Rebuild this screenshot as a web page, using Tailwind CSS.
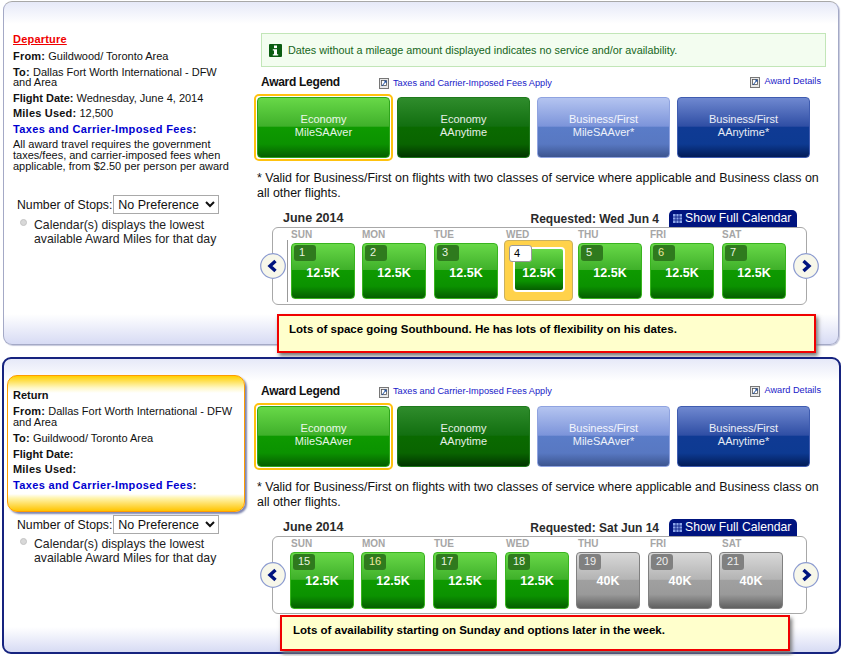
<!DOCTYPE html>
<html lang="en">
<head>
  <meta charset="UTF-8" />
  <title>Award Calendar</title>
  <script src="https://cdn.jsdelivr.net/npm/@tailwindcss/browser@4"></script>
</head>
<body class="bg-white">
<div class="w-[847px] h-[656px] overflow-hidden relative font-['Liberation_Sans',Arial,sans-serif] text-[11px] text-[#111]">

  <!-- departure panel -->
  <section class="relative ml-[3px] mt-[1px] w-[836px] h-[344px] flex border border-[#a4a9c6] border-t-[#a8a8a8] rounded-[9px] shadow-[1px_1px_1px_#c5c8dc] bg-[linear-gradient(#e6e9f8,#ffffff_22px,#ffffff_312px,#d7dbf4)]">
    <div class="w-[250px] shrink-0 pl-[9px] pt-[30px]">
      <p class="font-bold text-[#f00000] underline leading-[14px] tracking-[0.2px]">Departure</p>
      <p class="mt-[3px] leading-[14px]"><b class="tracking-[0.2px]">From:</b> Guildwood/ Toronto Area</p>
      <p class="mt-[2px] leading-[10px] pt-[2px] pb-[1px] w-[225px]"><b class="tracking-[0.2px]">To:</b> Dallas Fort Worth International - DFW and Area</p>
      <p class="mt-[3px] leading-[14px]"><b>Flight Date:</b> Wednesday, June 4, 2014</p>
      <p class="mt-[1px] leading-[14px]"><b class="tracking-[0.2px]">Miles Used:</b> 12,500</p>
      <p class="mt-[2px] leading-[14px] font-bold tracking-[0.35px]"><span class="text-[#0000d0]">Taxes and Carrier-Imposed Fees</span>:</p>
      <p class="mt-[3px] leading-[11px] w-[225px]">All award travel requires the government taxes/fees, and carrier-imposed fees when applicable, from $2.50 per person per award</p>
      <div class="mt-[23px] ml-[4px] flex items-center gap-[1px] text-[12.25px]">
        <span class="mt-[1px]">Number of Stops:</span>
        <select class="w-[106px] h-[19px] border border-[#a9a9a9] bg-white text-[12.5px]"><option>No Preference</option></select>
      </div>
      <div class="mt-[4px] ml-[7px] flex leading-[14px] text-[#222]">
        <span class="mt-[1px] mr-[7px] w-[7px] h-[7px] rounded-full bg-[#d8d8d8] border border-[#c4c4c4] shrink-0"></span>
        <p class="w-[190px] text-[12.25px]">Calendar(s) displays the lowest available Award Miles for that day</p>
      </div>
    </div>
    <div class="w-[570px] pt-[31px]">
      <div class="ml-[7px] w-[565px] h-[34px] border border-[#c2e6b8] bg-[#f3fdf0] flex items-center pl-[7px] gap-[6px] text-[10.8px] text-[#15651a]">
        <svg width="13" height="13" viewBox="0 0 13 13"><rect width="13" height="13" rx="1" fill="#0b5c12"/><rect x="5" y="1.5" width="3" height="2.6" fill="#fff"/><path d="M3.8 5.2h4.2v5h1.2v1.4H3.8v-1.4H5V6.6H3.8z" fill="#fff"/></svg>
        <span>Dates without a mileage amount displayed indicates no service and/or availability.</span>
      </div>
      <div class="ml-[7px] mt-[7px] w-[560px] h-[16px] flex items-center">
        <b class="w-[118px] text-[12px] text-[#111] tracking-[-0.3px]">Award Legend</b>
        <svg width="10" height="11" viewBox="0 0 10 11" class="mr-[4px] mt-[3px]"><rect x="0.5" y="0.5" width="9" height="10" fill="#e8e8e8" stroke="#777"/><rect x="2.5" y="2.5" width="5" height="5" fill="#fff" stroke="#555" stroke-width=".8"/><path d="M3 8l4-5M5 3h2v2" fill="none" stroke="#1f4f9f"/></svg>
        <span class="text-[9.2px] text-[#2020c8] mt-[3px]">Taxes and Carrier-Imposed Fees Apply</span>
        <svg width="10" height="11" viewBox="0 0 10 11" class="ml-auto mr-[4px]"><rect x="0.5" y="0.5" width="9" height="10" fill="#e8e8e8" stroke="#777"/><rect x="2.5" y="2.5" width="5" height="5" fill="#fff" stroke="#555" stroke-width=".8"/><path d="M3 8l4-5M5 3h2v2" fill="none" stroke="#1f4f9f"/></svg>
        <span class="text-[9.2px] text-[#2020c8]">Award Details</span>
      </div>
      <div class="mt-[4px] flex items-center gap-[7px] leading-[13px] text-center text-white/90">
        <div class="w-[139px] h-[67px] border-[2px] border-[#ffc20e] rounded-[5px] p-[1px]">
          <div class="h-full border border-[#2fa51c] rounded-[4px] flex flex-col justify-center pb-[3px] bg-[linear-gradient(#68d848,#3fb02a_48%,#0e9a00_49%,#0b9200_78%,#055f00)]">Economy<br>MileSAAver</div>
        </div>
        <div class="w-[133px] h-[61px] -ml-[3px] border border-[#1f7a1c] rounded-[4px] flex flex-col justify-center pb-[3px] bg-[linear-gradient(#2f8c2c,#126f10_48%,#0a6a00_49%,#096400_78%,#013500)]">Economy<br>AAnytime</div>
        <div class="w-[133px] h-[61px] border border-[#8fa3e0] rounded-[4px] flex flex-col justify-center pb-[3px] bg-[linear-gradient(#b4c4f0,#7c94da_48%,#5a7cc8_49%,#5878c2_78%,#3c5590)]">Business/First<br>MileSAAver*</div>
        <div class="w-[133px] h-[61px] border border-[#3f5cb0] rounded-[4px] flex flex-col justify-center pb-[3px] bg-[linear-gradient(#6f88d0,#2f4ea4_48%,#0f3a94_49%,#0d3a92_78%,#021c58)]">Business/First<br>AAnytime*</div>
      </div>
      <p class="ml-[3px] mt-[10px] w-[570px] leading-[15px] text-[12.45px]">* Valid for Business/First on flights with two classes of service where applicable and Business class on all other flights.</p>
      <div class="ml-[29px] mt-[8px] w-[514px] h-[18px] flex items-center font-bold text-[12px] text-[#2a2a2a]">
        <span class="text-[12.5px] mt-[1px]">June 2014</span>
        <span class="ml-auto mr-[10px] mt-[1px]">Requested: Wed Jun 4</span>
        <span class="w-[128px] h-[17px] bg-[#00147f] rounded-t-[5px] flex items-center pl-[4px] gap-[3px] font-normal text-white text-[12.2px]">
          <svg width="9" height="9" viewBox="0 0 9 9"><path d="M0 0h9v9H0z" fill="#8aa4e8"/><path d="M3 0v9M6 0v9M0 3h9M0 6h9" stroke="#00147f" stroke-width=".8"/></svg>Show Full Calendar
        </span>
      </div>
      <div class="relative ml-[18px] w-[535px] h-[78px] border border-[#a8a8a8] rounded-[6px] bg-white">
        <svg width="26" height="26" viewBox="0 0 26 26" class="absolute -left-[13px] top-[25px]"><circle cx="13" cy="13" r="12.3" fill="#f7f7ea" stroke="#8c9bd0" stroke-width="1.2"/><path d="M15.5 8L10 13l5.5 5" fill="none" stroke="#00147f" stroke-width="3.4"/></svg>
        <svg width="26" height="26" viewBox="0 0 26 26" class="absolute -right-[13px] top-[25px]"><circle cx="13" cy="13" r="12.3" fill="#f7f7ea" stroke="#8c9bd0" stroke-width="1.2"/><path d="M10.5 8l5.5 5-5.5 5" fill="none" stroke="#00147f" stroke-width="3.4"/></svg>
        <div class="flex ml-[18px] text-[10px] font-bold text-[#a6a6a6] leading-[12px] pt-[1px]">
          <span class="w-[71px]">SUN</span><span class="w-[72px]">MON</span><span class="w-[72px]">TUE</span><span class="w-[72px]">WED</span><span class="w-[72px]">THU</span><span class="w-[72px]">FRI</span><span>SAT</span>
        </div>
        <div class="absolute left-[14px] top-[12px] h-[62px] border-l border-[#999]"></div>
        <div class="flex ml-[18px] mt-[2px] gap-[8px]">
          <div class="relative w-[64px] h-[56px] border border-[#39b41f] rounded-[4px] bg-[linear-gradient(#68d848,#3fb02a_48%,#0e9a00_49%,#0b9200_78%,#055f00)] text-white text-center"><span class="absolute left-[2px] top-[1px] w-[22px] h-[16px] rounded-[3px] bg-[#2f7a1e] text-[#e8f4e0] text-[11px] leading-[14px] text-left pl-[5px]">1</span><b class="block pt-[21px] text-[12.5px] leading-[16px]">12.5K</b></div>
          <div class="-ml-[1px] relative w-[64px] h-[56px] border border-[#39b41f] rounded-[4px] bg-[linear-gradient(#68d848,#3fb02a_48%,#0e9a00_49%,#0b9200_78%,#055f00)] text-white text-center"><span class="absolute left-[2px] top-[1px] w-[22px] h-[16px] rounded-[3px] bg-[#2f7a1e] text-[#e8f4e0] text-[11px] leading-[14px] text-left pl-[5px]">2</span><b class="block pt-[21px] text-[12.5px] leading-[16px]">12.5K</b></div>
          <div class="relative w-[64px] h-[56px] border border-[#39b41f] rounded-[4px] bg-[linear-gradient(#68d848,#3fb02a_48%,#0e9a00_49%,#0b9200_78%,#055f00)] text-white text-center"><span class="absolute left-[2px] top-[1px] w-[22px] h-[16px] rounded-[3px] bg-[#2f7a1e] text-[#e8f4e0] text-[11px] leading-[14px] text-left pl-[5px]">3</span><b class="block pt-[21px] text-[12.5px] leading-[16px]">12.5K</b></div>
          <div class="relative w-[64px] h-[56px]">
            <div class="absolute -left-[2px] -top-[3px] w-[69px] h-[61px] rounded-[4px] bg-[#ffd24a] border border-[#c9b060]"></div>
            <div class="absolute left-[7px] top-[4px] w-[52px] h-[45px] rounded-[4px] border-[2px] border-white bg-[linear-gradient(#68d848,#3fb02a_48%,#0e9a00_49%,#0b9200_78%,#055f00)] text-white text-center"><b class="block pt-[16px] text-[12.5px] leading-[16px]">12.5K</b></div>
            <span class="absolute left-[3px] top-[2px] w-[23px] h-[17px] rounded-[3px] bg-white border border-[#999] text-black text-[11px] leading-[15px] pl-[4px]">4</span>
          </div>
          <div class="relative w-[64px] h-[56px] border border-[#39b41f] rounded-[4px] bg-[linear-gradient(#68d848,#3fb02a_48%,#0e9a00_49%,#0b9200_78%,#055f00)] text-white text-center"><span class="absolute left-[2px] top-[1px] w-[22px] h-[16px] rounded-[3px] bg-[#2f7a1e] text-[#e8f4e0] text-[11px] leading-[14px] text-left pl-[5px]">5</span><b class="block pt-[21px] text-[12.5px] leading-[16px]">12.5K</b></div>
          <div class="relative w-[64px] h-[56px] border border-[#39b41f] rounded-[4px] bg-[linear-gradient(#68d848,#3fb02a_48%,#0e9a00_49%,#0b9200_78%,#055f00)] text-white text-center"><span class="absolute left-[2px] top-[1px] w-[22px] h-[16px] rounded-[3px] bg-[#2f7a1e] text-[#f0e8a0] text-[11px] leading-[14px] text-left pl-[5px]">6</span><b class="block pt-[21px] text-[12.5px] leading-[16px]">12.5K</b></div>
          <div class="relative w-[64px] h-[56px] border border-[#39b41f] rounded-[4px] bg-[linear-gradient(#68d848,#3fb02a_48%,#0e9a00_49%,#0b9200_78%,#055f00)] text-white text-center"><span class="absolute left-[2px] top-[1px] w-[22px] h-[16px] rounded-[3px] bg-[#2f7a1e] text-[#e8f4e0] text-[11px] leading-[14px] text-left pl-[5px]">7</span><b class="block pt-[21px] text-[12.5px] leading-[16px]">12.5K</b></div>
        </div>
      </div>
    </div>
    <div class="absolute left-[273px] top-[312px] w-[539px] h-[39px] border-[2px] border-[#f00000] bg-[#ffffcc] shadow-[2px_3px_4px_#777] pl-[10px] pt-[6px] font-bold text-[11.5px] leading-[14px] text-black">Lots of space going Southbound. He has lots of flexibility on his dates.</div>
  </section>

  <!-- return panel -->
  <section class="relative ml-[2px] mt-[12px] w-[839px] h-[297px] flex border-[2px] border-[#16237f] rounded-[9px] bg-[linear-gradient(#e6e9f8,#ffffff_22px,#ffffff_268px,#d7dbf4)]">
    <div class="w-[248px] shrink-0">
      <div class="ml-[3px] mt-[16px] w-[238px] h-[137px] border-[1.5px] border-[#ff9c00] rounded-[10px] pl-[5px] pt-[12px] shadow-[2px_2px_2px_#7f86b0] bg-[linear-gradient(#ffd000,#fff8c8_12px,#ffffff_17px,#ffffff_118px,#fff5b0_122px,#ffc400)]">
        <p class="font-bold leading-[14px]">Return</p>
        <p class="mt-[3px] leading-[11px] pt-[1px] w-[225px]"><b class="tracking-[0.2px]">From:</b> Dallas Fort Worth International - DFW and Area</p>
        <p class="mt-[3px] leading-[14px]"><b class="tracking-[0.2px]">To:</b> Guildwood/ Toronto Area</p>
        <p class="mt-[2px] leading-[14px] font-bold">Flight Date:</p>
        <p class="mt-[1px] leading-[14px] font-bold tracking-[0.2px]">Miles Used:</p>
        <p class="mt-[2px] leading-[14px] font-bold tracking-[0.35px]"><span class="text-[#0000d0]">Taxes and Carrier-Imposed Fees</span>:</p>
      </div>
      <div class="mt-[3px] ml-[13px] flex items-center gap-[1px] text-[12.25px]">
        <span class="mt-[1px]">Number of Stops:</span>
        <select class="w-[106px] h-[19px] border border-[#a9a9a9] bg-white text-[12.5px]"><option>No Preference</option></select>
      </div>
      <div class="mt-[3px] ml-[16px] flex leading-[14px] text-[#222]">
        <span class="mt-[1px] mr-[7px] w-[7px] h-[7px] rounded-full bg-[#d8d8d8] border border-[#c4c4c4] shrink-0"></span>
        <p class="w-[190px] text-[12.25px]">Calendar(s) displays the lowest available Award Miles for that day</p>
      </div>
    </div>
    <div class="w-[570px] pt-[24px]">
      <div class="ml-[9px] w-[560px] h-[16px] flex items-center">
        <b class="w-[118px] text-[12px] text-[#111] tracking-[-0.3px]">Award Legend</b>
        <svg width="10" height="11" viewBox="0 0 10 11" class="mr-[4px] mt-[2px]"><rect x="0.5" y="0.5" width="9" height="10" fill="#e8e8e8" stroke="#777"/><rect x="2.5" y="2.5" width="5" height="5" fill="#fff" stroke="#555" stroke-width=".8"/><path d="M3 8l4-5M5 3h2v2" fill="none" stroke="#1f4f9f"/></svg>
        <span class="text-[9.2px] text-[#2020c8] mt-[2px]">Taxes and Carrier-Imposed Fees Apply</span>
        <svg width="10" height="11" viewBox="0 0 10 11" class="ml-auto mr-[4px]"><rect x="0.5" y="0.5" width="9" height="10" fill="#e8e8e8" stroke="#777"/><rect x="2.5" y="2.5" width="5" height="5" fill="#fff" stroke="#555" stroke-width=".8"/><path d="M3 8l4-5M5 3h2v2" fill="none" stroke="#1f4f9f"/></svg>
        <span class="text-[9.2px] text-[#2020c8]">Award Details</span>
      </div>
      <div class="ml-[2px] mt-[4px] flex items-center gap-[7px] leading-[13px] text-center text-white/90">
        <div class="w-[139px] h-[67px] border-[2px] border-[#ffc20e] rounded-[5px] p-[1px]">
          <div class="h-full border border-[#2fa51c] rounded-[4px] flex flex-col justify-center pb-[3px] bg-[linear-gradient(#68d848,#3fb02a_48%,#0e9a00_49%,#0b9200_78%,#055f00)]">Economy<br>MileSAAver</div>
        </div>
        <div class="w-[133px] h-[61px] -ml-[3px] border border-[#1f7a1c] rounded-[4px] flex flex-col justify-center pb-[3px] bg-[linear-gradient(#2f8c2c,#126f10_48%,#0a6a00_49%,#096400_78%,#013500)]">Economy<br>AAnytime</div>
        <div class="w-[133px] h-[61px] border border-[#8fa3e0] rounded-[4px] flex flex-col justify-center pb-[3px] bg-[linear-gradient(#b4c4f0,#7c94da_48%,#5a7cc8_49%,#5878c2_78%,#3c5590)]">Business/First<br>MileSAAver*</div>
        <div class="w-[133px] h-[61px] border border-[#3f5cb0] rounded-[4px] flex flex-col justify-center pb-[3px] bg-[linear-gradient(#6f88d0,#2f4ea4_48%,#0f3a94_49%,#0d3a92_78%,#021c58)]">Business/First<br>AAnytime*</div>
      </div>
      <p class="ml-[5px] mt-[10px] w-[570px] leading-[15px] text-[12.45px]">* Valid for Business/First on flights with two classes of service where applicable and Business class on all other flights.</p>
      <div class="ml-[31px] mt-[8px] w-[514px] h-[18px] flex items-center font-bold text-[12px] text-[#2a2a2a]">
        <span class="text-[12.5px] mt-[1px]">June 2014</span>
        <span class="ml-auto mr-[10px] mt-[1px]">Requested: Sat Jun 14</span>
        <span class="w-[128px] h-[17px] bg-[#00147f] rounded-t-[5px] flex items-center pl-[4px] gap-[3px] font-normal text-white text-[12.2px]">
          <svg width="9" height="9" viewBox="0 0 9 9"><path d="M0 0h9v9H0z" fill="#8aa4e8"/><path d="M3 0v9M6 0v9M0 3h9M0 6h9" stroke="#00147f" stroke-width=".8"/></svg>Show Full Calendar
        </span>
      </div>
      <div class="relative ml-[20px] w-[535px] h-[78px] border border-[#a8a8a8] rounded-[6px] bg-white">
        <svg width="26" height="26" viewBox="0 0 26 26" class="absolute -left-[13px] top-[25px]"><circle cx="13" cy="13" r="12.3" fill="#f7f7ea" stroke="#8c9bd0" stroke-width="1.2"/><path d="M15.5 8L10 13l5.5 5" fill="none" stroke="#00147f" stroke-width="3.4"/></svg>
        <svg width="26" height="26" viewBox="0 0 26 26" class="absolute -right-[13px] top-[25px]"><circle cx="13" cy="13" r="12.3" fill="#f7f7ea" stroke="#8c9bd0" stroke-width="1.2"/><path d="M10.5 8l5.5 5-5.5 5" fill="none" stroke="#00147f" stroke-width="3.4"/></svg>
        <div class="flex ml-[18px] text-[10px] font-bold text-[#a6a6a6] leading-[12px] pt-[1px]">
          <span class="w-[71px]">SUN</span><span class="w-[72px]">MON</span><span class="w-[72px]">TUE</span><span class="w-[72px]">WED</span><span class="w-[72px]">THU</span><span class="w-[72px]">FRI</span><span>SAT</span>
        </div>
        <div class="flex ml-[17px] mt-[2px] gap-[8px]">
          <div class="relative w-[64px] h-[57px] border border-[#39b41f] rounded-[4px] bg-[linear-gradient(#68d848,#3fb02a_48%,#0e9a00_49%,#0b9200_78%,#055f00)] text-white text-center"><span class="absolute left-[2px] top-[1px] w-[22px] h-[16px] rounded-[3px] bg-[#2f7a1e] text-[#e8f4e0] text-[11px] leading-[14px] text-left pl-[5px]">15</span><b class="block pt-[20px] text-[12.5px] leading-[16px]">12.5K</b></div>
          <div class="-ml-[1px] relative w-[64px] h-[57px] border border-[#39b41f] rounded-[4px] bg-[linear-gradient(#68d848,#3fb02a_48%,#0e9a00_49%,#0b9200_78%,#055f00)] text-white text-center"><span class="absolute left-[2px] top-[1px] w-[22px] h-[16px] rounded-[3px] bg-[#2f7a1e] text-[#f0e8a0] text-[11px] leading-[14px] text-left pl-[5px]">16</span><b class="block pt-[20px] text-[12.5px] leading-[16px]">12.5K</b></div>
          <div class="relative w-[64px] h-[57px] border border-[#39b41f] rounded-[4px] bg-[linear-gradient(#68d848,#3fb02a_48%,#0e9a00_49%,#0b9200_78%,#055f00)] text-white text-center"><span class="absolute left-[2px] top-[1px] w-[22px] h-[16px] rounded-[3px] bg-[#2f7a1e] text-[#e8f4e0] text-[11px] leading-[14px] text-left pl-[5px]">17</span><b class="block pt-[20px] text-[12.5px] leading-[16px]">12.5K</b></div>
          <div class="relative w-[64px] h-[57px] border border-[#39b41f] rounded-[4px] bg-[linear-gradient(#68d848,#3fb02a_48%,#0e9a00_49%,#0b9200_78%,#055f00)] text-white text-center"><span class="absolute left-[2px] top-[1px] w-[22px] h-[16px] rounded-[3px] bg-[#2f7a1e] text-[#e8f4e0] text-[11px] leading-[14px] text-left pl-[5px]">18</span><b class="block pt-[20px] text-[12.5px] leading-[16px]">12.5K</b></div>
          <div class="-ml-[1px] relative w-[64px] h-[57px] border border-[#808080] rounded-[4px] bg-[linear-gradient(#d8d8d8,#b4b4b4_48%,#a0a0a0_49%,#9a9a9a_75%,#606060)] text-white text-center"><span class="absolute left-[2px] top-[1px] w-[22px] h-[16px] rounded-[3px] bg-[#808080] text-[#eee] text-[11px] leading-[14px] text-left pl-[5px]">19</span><b class="block pt-[20px] text-[12.5px] leading-[16px]">40K</b></div>
          <div class="relative w-[64px] h-[57px] border border-[#808080] rounded-[4px] bg-[linear-gradient(#d8d8d8,#b4b4b4_48%,#a0a0a0_49%,#9a9a9a_75%,#606060)] text-white text-center"><span class="absolute left-[2px] top-[1px] w-[22px] h-[16px] rounded-[3px] bg-[#808080] text-[#eee] text-[11px] leading-[14px] text-left pl-[5px]">20</span><b class="block pt-[20px] text-[12.5px] leading-[16px]">40K</b></div>
          <div class="-ml-[1px] relative w-[64px] h-[57px] border border-[#808080] rounded-[4px] bg-[linear-gradient(#d8d8d8,#b4b4b4_48%,#a0a0a0_49%,#9a9a9a_75%,#606060)] text-white text-center"><span class="absolute left-[2px] top-[1px] w-[22px] h-[16px] rounded-[3px] bg-[#808080] text-[#eee] text-[11px] leading-[14px] text-left pl-[5px]">21</span><b class="block pt-[20px] text-[12.5px] leading-[16px]">40K</b></div>
        </div>
      </div>
    </div>
    <div class="absolute left-[276px] top-[256px] w-[510px] h-[36px] border-[2px] border-[#f00000] bg-[#ffffcc] shadow-[2px_3px_4px_#777] pl-[11px] pt-[6px] font-bold text-[11.5px] leading-[14px] text-black">Lots of availability starting on Sunday and options later in the week.</div>
  </section>
</div>
</body>
</html>
